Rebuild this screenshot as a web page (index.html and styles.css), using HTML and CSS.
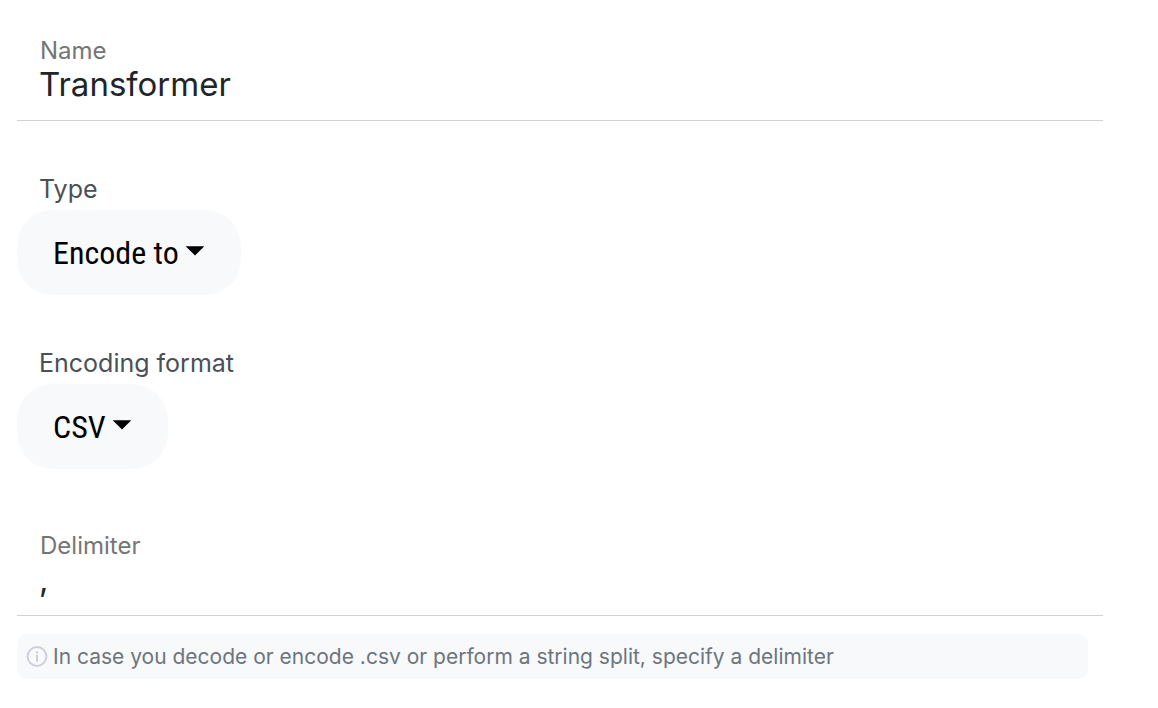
FILE: index.html
```html
<!DOCTYPE html>
<html lang="en">
<head>
<meta charset="utf-8">
<title>Transformer</title>
<link rel="stylesheet" href="styles.css">
</head>
<body>
<form class="form">
  <div class="field">
    <label class="field-label" for="name">Name</label>
    <input class="field-input" id="name" type="text" value="Transformer">
  </div>
  <div class="choice">
    <label class="choice-label" for="type">Type</label>
    <div class="pill">
      <select class="pill-select" id="type"><option>Encode to</option></select>
      <svg class="caret" viewBox="0 0 20 10" aria-hidden="true"><path d="M0.7 0.3h18.6L10 9.6z"/></svg>
    </div>
  </div>
  <div class="choice">
    <label class="choice-label" for="format">Encoding format</label>
    <div class="pill">
      <select class="pill-select" id="format"><option>CSV</option></select>
      <svg class="caret" viewBox="0 0 20 10" aria-hidden="true"><path d="M0.7 0.3h18.6L10 9.6z"/></svg>
    </div>
  </div>
  <div class="field field-delimiter">
    <label class="field-label" for="delimiter">Delimiter</label>
    <input class="field-input" id="delimiter" type="text" value=",">
  </div>
  <p class="hint">
    <svg class="hint-icon" viewBox="0 0 22 22" aria-hidden="true"><circle cx="11" cy="10.5" r="9.4"/><path d="M11 9v6.8M11 5.2v2.4"/></svg>
    <span>In case you decode or encode .csv or perform a string split, specify a delimiter</span>
  </p>
</form>
</body>
</html>
```
FILE: styles.css
```css
* { box-sizing: border-box; }
body {
  margin: 0;
  background: #fff;
  color: #212529;
  font-family: Inter, sans-serif;
}
.form { padding: 38px 55px 28px 17px; }
.field {
  display: flex;
  flex-direction: column;
  border-bottom: 1px solid #d0d3d6;
  padding-bottom: 16px;
}
.field-label {
  padding-left: 23px;
  color: #757575;
  font-size: 24px;
  line-height: 26px;
}
.field-input {
  width: 100%;
  height: 40px;
  padding: 0 22px;
  border: 0;
  outline: 0;
  background: transparent;
  color: #212529;
  font: 400 33px/40px Inter, sans-serif;
}
.choice {
  display: flex;
  flex-direction: column;
  align-items: flex-start;
  margin-top: 52px;
}
.choice-label {
  padding-left: 22px;
  color: #495057;
  font-size: 25px;
  line-height: 32px;
  margin-bottom: 5px;
}
.pill {
  display: flex;
  align-items: center;
  gap: 6px;
  height: 85px;
  padding: 0 36px;
  border-radius: 36px;
  background: #f8f9fb;
}
.pill-select {
  appearance: none;
  border: 0;
  padding: 0;
  outline: 0;
  background: transparent;
  color: #000;
  font: 400 32px/40px "Roboto Condensed", Roboto, sans-serif;
}
.caret {
  width: 20px;
  height: 10px;
  margin-bottom: 4px;
  fill: #000;
}
.field-delimiter { margin-top: 64px; }
.hint {
  display: flex;
  align-items: center;
  gap: 5px;
  height: 45px;
  margin: 18px 15px 0 0;
  padding: 0 9px;
  border-radius: 10px;
  background: #f8f9fb;
  color: #6c757d;
  font-size: 21px;
}
.hint-icon {
  width: 22px;
  height: 22px;
  fill: none;
  stroke: #d0cce0;
  stroke-width: 2;
}
```
